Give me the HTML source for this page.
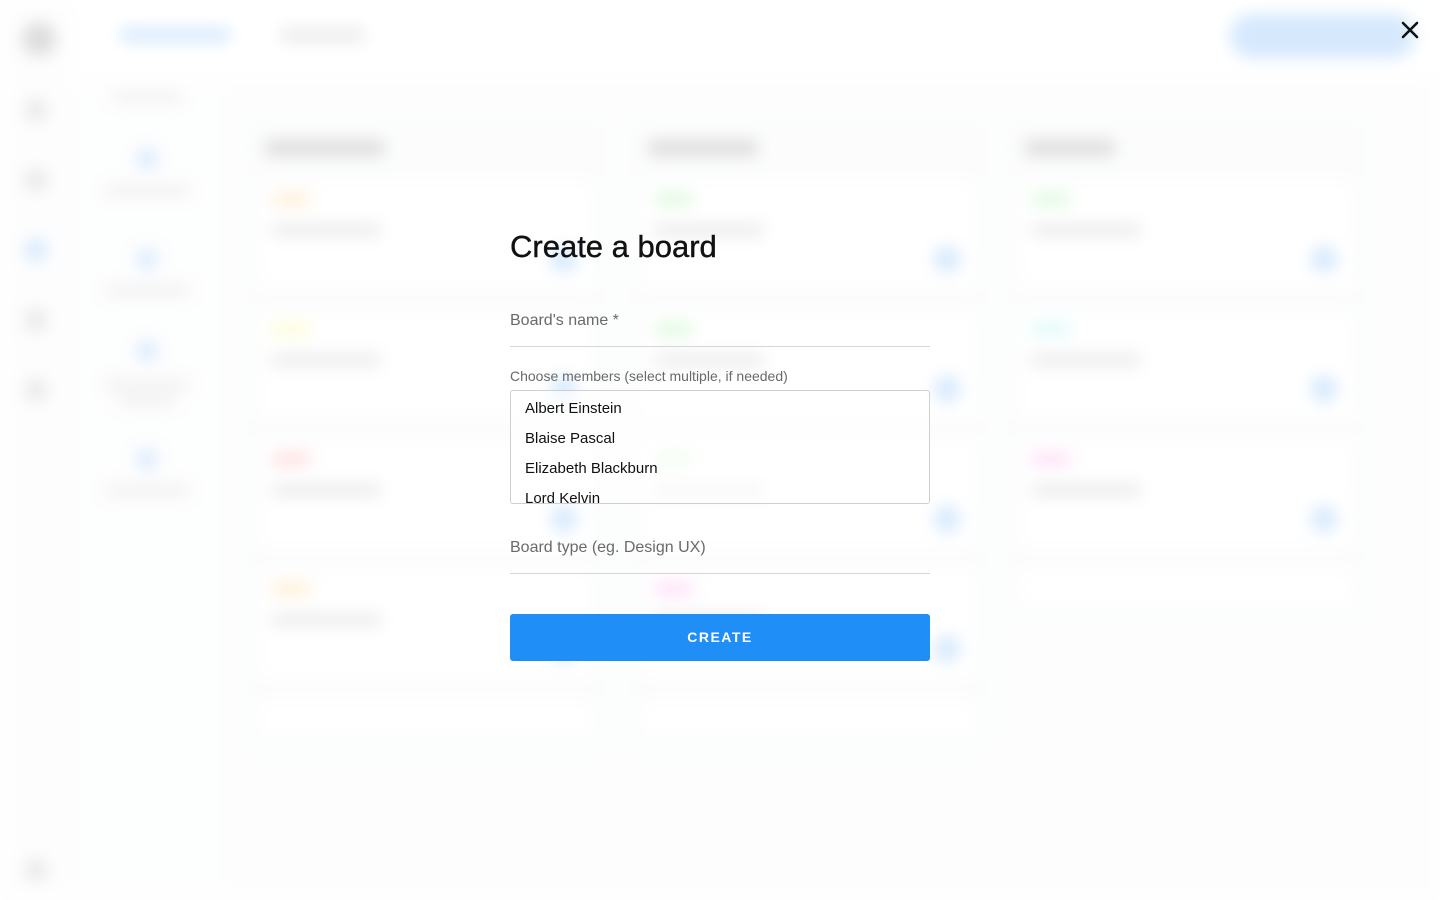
<!DOCTYPE html>
<html><head><meta charset="utf-8"><style>
*{box-sizing:border-box;margin:0;padding:0}
body{width:1440px;height:900px;overflow:hidden;background:#fff;font-family:"Liberation Sans",sans-serif;position:relative}
#bg{position:absolute;inset:0;filter:blur(8px);opacity:.4}
.abs{position:absolute}
.col{position:absolute;top:120px;width:362px;background:#eef1f5;border-radius:8px}
.card{position:absolute;left:12px;right:12px;height:110px;background:#fff;border-radius:6px;box-shadow:0 1px 3px rgba(0,0,0,.15)}
.tag{position:absolute;left:14px;top:14px;width:40px;height:10px;border-radius:5px}
.ttl{position:absolute;left:14px;top:44px;width:110px;height:12px;background:#999;border-radius:4px}
.dot{position:absolute;right:18px;bottom:18px;width:26px;height:26px;border-radius:50%;background:#2f8ef5}
.si{position:absolute;left:26px;width:20px;height:20px;border-radius:4px;background:#888}
.ni{position:absolute;left:138px;width:18px;height:18px;border-radius:4px;background:#2f8ef5}
.nt{position:absolute;left:105px;width:84px;height:9px;border-radius:4px;background:#aaa}
#overlay{position:absolute;inset:0;background:rgba(255,255,255,.5)}
.lbl{position:absolute;left:510px;color:#6a6a6a;font-size:16px}
.line{position:absolute;left:510px;width:420px;height:1px;background:#d6d6d6}
</style></head><body>
<div id="bg">
<div class="abs" style="left:0;top:0;width:75px;height:900px;background:#f4f6f8"></div>
<div class="abs" style="left:22px;top:22px;width:34px;height:34px;border-radius:50%;background:#555"></div>
<div class="si" style="top:100px"></div><div class="si" style="top:170px"></div><div class="si" style="top:240px;background:#2f8ef5"></div><div class="si" style="top:310px"></div><div class="si" style="top:380px"></div><div class="si" style="top:860px"></div>
<div class="abs" style="left:75px;top:75px;width:150px;height:825px;background:#f7f8fa"></div>
<div class="nt" style="top:92px;left:112px;width:70px"></div>
<div class="ni" style="top:150px"></div><div class="nt" style="top:186px"></div>
<div class="ni" style="top:250px"></div><div class="nt" style="top:286px"></div>
<div class="ni" style="top:342px"></div><div class="nt" style="top:380px"></div><div class="nt" style="top:396px;left:118px;width:58px"></div>
<div class="ni" style="top:450px"></div><div class="nt" style="top:486px"></div>
<div class="abs" style="left:120px;top:28px;width:110px;height:14px;background:#2f8ef5;border-radius:4px"></div>
<div class="abs" style="left:280px;top:28px;width:85px;height:14px;background:#999;border-radius:4px"></div>
<div class="abs" style="left:1230px;top:14px;width:185px;height:44px;background:#2f8ef5;border-radius:22px"></div>
<div class="abs" style="left:225px;top:75px;width:1215px;height:825px;background:#f3f5f8"></div>
<div class="col" style="left:245px;height:630px">
 <div class="abs" style="left:20px;top:20px;width:120px;height:16px;background:#555;border-radius:4px"></div>
 <div class="card" style="top:60px"><div class="tag" style="background:#f90"></div><div class="ttl"></div><div class="dot"></div></div>
 <div class="card" style="top:190px"><div class="tag" style="background:#ee0"></div><div class="ttl"></div><div class="dot"></div></div>
 <div class="card" style="top:320px"><div class="tag" style="background:#f33"></div><div class="ttl"></div><div class="dot"></div></div>
 <div class="card" style="top:450px"><div class="tag" style="background:#f90"></div><div class="ttl"></div><div class="dot"></div></div>
 <div class="card" style="top:580px;height:40px"></div>
</div>
<div class="col" style="left:628px;height:630px">
 <div class="abs" style="left:20px;top:20px;width:110px;height:16px;background:#555;border-radius:4px"></div>
 <div class="card" style="top:60px"><div class="tag" style="background:#3d3"></div><div class="ttl"></div><div class="dot"></div></div>
 <div class="card" style="top:190px"><div class="tag" style="background:#3d3"></div><div class="ttl"></div><div class="dot"></div></div>
 <div class="card" style="top:320px"><div class="tag" style="background:#3d3"></div><div class="ttl"></div><div class="dot"></div></div>
 <div class="card" style="top:450px"><div class="tag" style="background:#f3c"></div><div class="ttl"></div><div class="dot"></div></div>
 <div class="card" style="top:580px;height:40px"></div>
</div>
<div class="col" style="left:1005px;height:500px">
 <div class="abs" style="left:20px;top:20px;width:90px;height:16px;background:#555;border-radius:4px"></div>
 <div class="card" style="top:60px"><div class="tag" style="background:#3d3"></div><div class="ttl"></div><div class="dot"></div></div>
 <div class="card" style="top:190px"><div class="tag" style="background:#3dd"></div><div class="ttl"></div><div class="dot"></div></div>
 <div class="card" style="top:320px"><div class="tag" style="background:#f3c"></div><div class="ttl"></div><div class="dot"></div></div>
 <div class="card" style="top:450px;height:40px"></div>
</div>
</div>
<div id="overlay"></div>
<svg class="abs" style="left:1400px;top:20px" width="20" height="20" viewBox="0 0 20 20"><path d="M3 3L17 17M17 3L3 17" stroke="#111" stroke-width="2.6" stroke-linecap="round"/></svg>
<div class="abs" style="left:510px;top:229px;font-size:31px;color:#111;-webkit-text-stroke:.4px #111">Create a board</div>
<div class="lbl" style="top:312px">Board's name *</div>
<div class="line" style="top:346px"></div>
<div class="lbl" style="top:368px;font-size:14px">Choose members (select multiple, if needed)</div>
<div class="abs" style="left:510px;top:390px;width:420px;height:114px;border:1px solid #cfcfcf;border-radius:3px;overflow:hidden;background:rgba(255,255,255,.6);font-size:15px;color:#111">
 <div class="abs" style="left:14px;top:9px">Albert Einstein</div>
 <div class="abs" style="left:14px;top:39px">Blaise Pascal</div>
 <div class="abs" style="left:14px;top:69px">Elizabeth Blackburn</div>
 <div class="abs" style="left:14px;top:99px">Lord Kelvin</div>
</div>
<div class="lbl" style="top:539px">Board type (eg. Design UX)</div>
<div class="line" style="top:573px"></div>
<div class="abs" style="left:510px;top:614px;width:420px;height:47px;background:#1f8ef7;border-radius:3px;color:#fff;font-size:14px;font-weight:bold;letter-spacing:1.5px;text-align:center;line-height:47px">CREATE</div>
</body></html>
